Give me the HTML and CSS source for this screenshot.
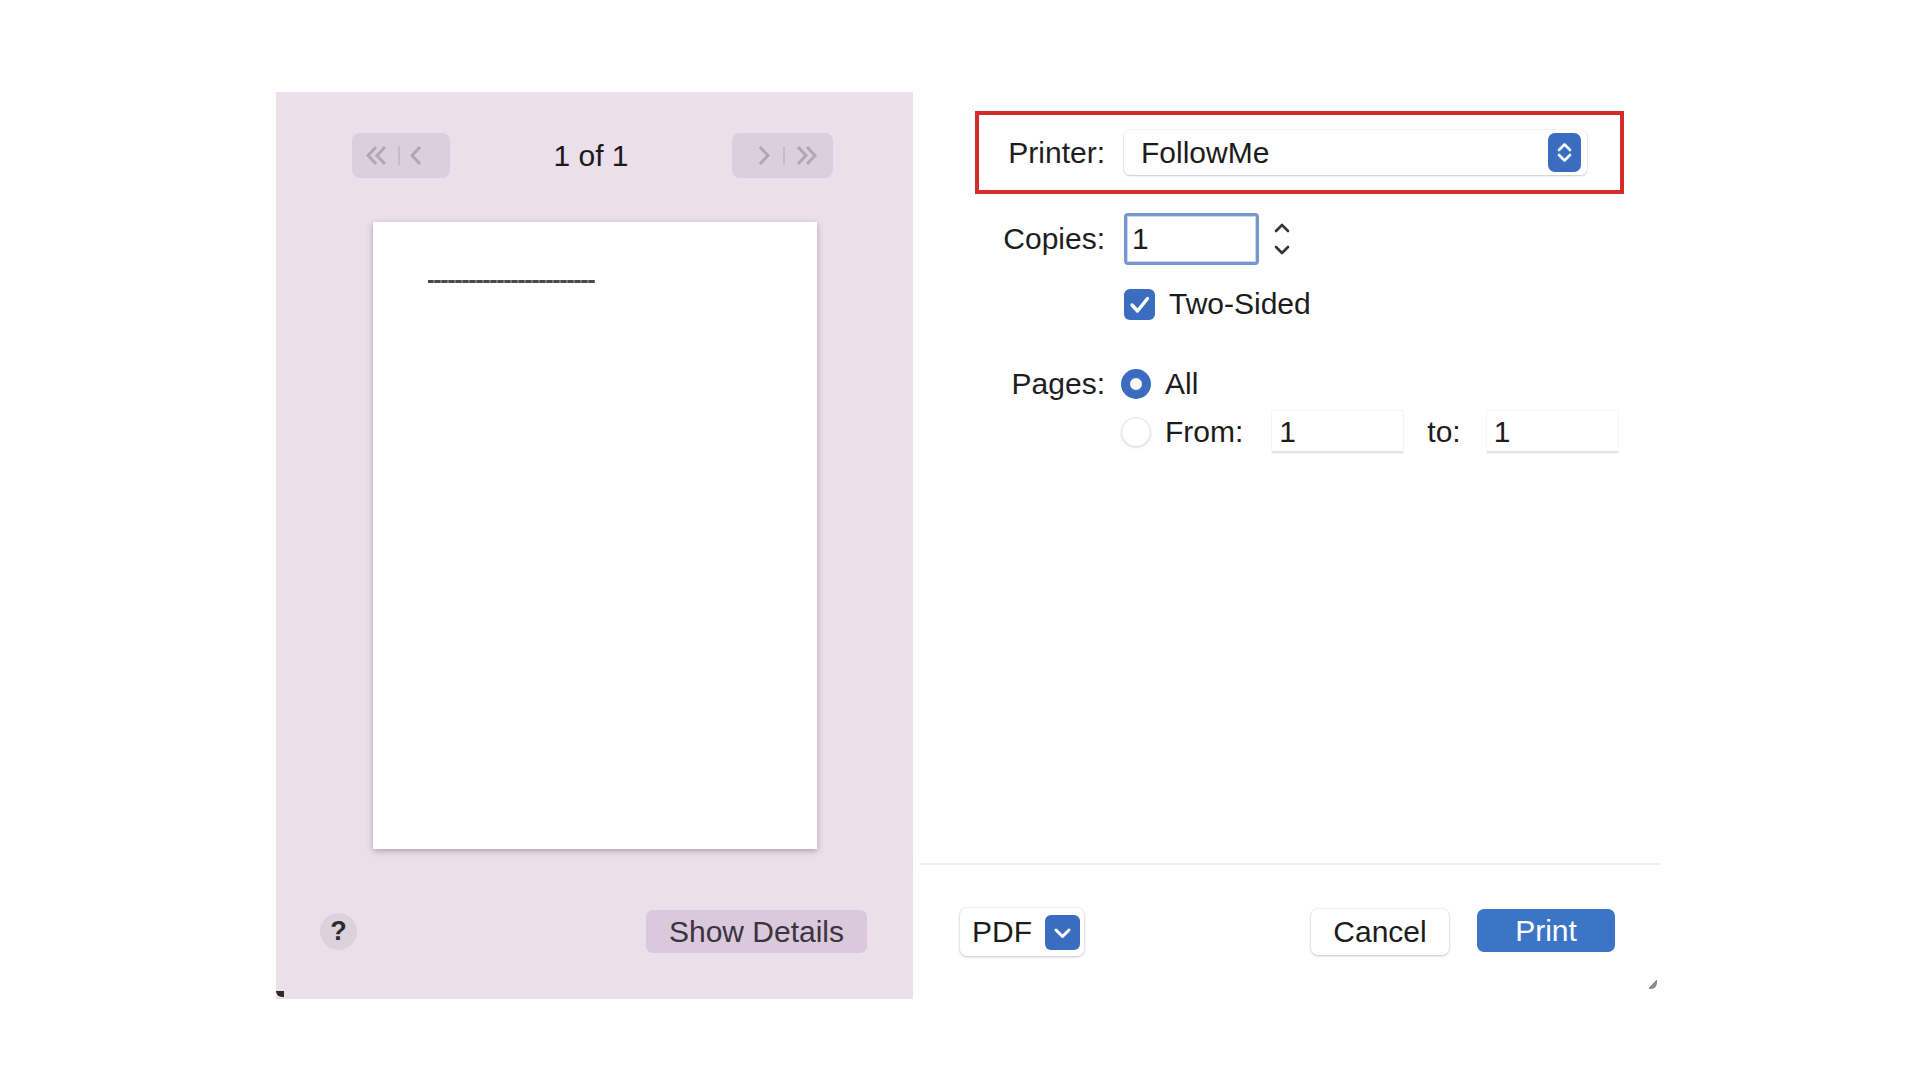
FILE: index.html
```html
<!DOCTYPE html>
<html lang="en">
<head>
    <meta charset="UTF-8">
    <meta name="viewport" content="width=device-width, initial-scale=1.0">
    <title>Print</title>
    <link rel="stylesheet" href="styles.css">
</head>
<body>
    <div class="dialog">
        <!-- preview side -->
        <div class="preview">
            <div class="nav">
                <div class="nav-btn">
                    <svg width="98" height="45" viewBox="0 0 98 45">
                        <path d="M24 14 L16 22.5 L24 31 M33 14 L25 22.5 L33 31" fill="none" stroke="#b3a5b5" stroke-width="3"/>
                        <line x1="47" y1="13" x2="47" y2="32" stroke="#c8bbc9" stroke-width="2"/>
                        <path d="M68 14 L60 22.5 L68 31" fill="none" stroke="#b3a5b5" stroke-width="3"/>
                    </svg>
                </div>
                <div class="page-count">1 of 1</div>
                <div class="nav-btn">
                    <svg width="101" height="45" viewBox="0 0 101 45">
                        <path d="M28 14 L36 22.5 L28 31" fill="none" stroke="#b3a5b5" stroke-width="3"/>
                        <line x1="52" y1="13" x2="52" y2="32" stroke="#c8bbc9" stroke-width="2"/>
                        <path d="M66 14 L74 22.5 L66 31 M75 14 L83 22.5 L75 31" fill="none" stroke="#b3a5b5" stroke-width="3"/>
                    </svg>
                </div>
            </div>
            <div class="paper">
                <div class="paper-line"></div>
            </div>
            <div class="preview-foot">
                <div class="help">?</div>
                <div class="details-btn">Show Details</div>
            </div>
        </div>

        <!-- settings side -->
        <div class="settings">
            <div class="form">
                <div class="row printer-row">
                    <span class="label">Printer:</span>
                    <div class="popup">
                        <span>FollowMe</span>
                        <svg width="33" height="39" viewBox="0 0 33 39">
                            <rect x="0" y="0" width="33" height="39" rx="7" fill="#3a6dc0"/>
                            <path d="M11 17 L16.5 11.5 L22 17 M11 22 L16.5 27.5 L22 22" fill="none" stroke="#fff" stroke-width="2.6" stroke-linecap="round" stroke-linejoin="round"/>
                        </svg>
                    </div>
                </div>
                <div class="row copies-row">
                    <span class="label">Copies:</span>
                    <div class="copies">
                        <div class="copies-input">1</div>
                        <svg width="18" height="36" viewBox="0 0 18 36">
                            <path d="M3 10 L9 4 L15 10 M3 26 L9 32 L15 26" fill="none" stroke="#333" stroke-width="2.6" stroke-linecap="round" stroke-linejoin="round"/>
                        </svg>
                    </div>
                </div>
                <div class="row check-row">
                    <span class="label"></span>
                    <div class="check">
                        <svg width="31" height="31" viewBox="0 0 31 31">
                            <rect width="31" height="31" rx="6" fill="#3a6dc0"/>
                            <path d="M8 16 L13.5 22 L23.5 9.5" fill="none" stroke="#fff" stroke-width="3.4" stroke-linecap="round" stroke-linejoin="round"/>
                        </svg>
                        <span>Two-Sided</span>
                    </div>
                </div>
                <div class="row pages-row">
                    <span class="label">Pages:</span>
                    <div class="radio">
                        <span class="dot on"></span>
                        <span>All</span>
                    </div>
                </div>
                <div class="row from-row">
                    <span class="label"></span>
                    <div class="radio">
                        <span class="dot"></span>
                        <span class="from-label">From:</span>
                        <div class="range-input">1</div>
                        <span class="to-label">to:</span>
                        <div class="range-input">1</div>
                    </div>
                </div>
            </div>
            <div class="settings-foot">
                <div class="pdf-btn">
                    <span>PDF</span>
                    <svg width="35" height="35" viewBox="0 0 35 35">
                        <rect width="35" height="35" rx="6" fill="#3a6dc0"/>
                        <path d="M11 15 L17.5 21.5 L24 15" fill="none" stroke="#fff" stroke-width="3" stroke-linecap="round" stroke-linejoin="round"/>
                    </svg>
                </div>
                <div class="actions">
                    <div class="btn cancel">Cancel</div>
                    <div class="btn print">Print</div>
                </div>
            </div>
        </div>
    </div>
</body>
</html>
```
FILE: styles.css
```css
/* base */
body {
    margin: 0;
    padding: 92px 0 0 276px;
    background: #fff;
    color: #1c1c1c;
    font-family: "Liberation Sans", Arial, sans-serif;
    font-size: 30px;
}
.dialog {
    position: relative;
    display: flex;
    width: 1385px;
    height: 907px;
}
.dialog::after {
    content: "";
    position: absolute;
    left: 0;
    bottom: 2px;
    width: 8px;
    height: 6px;
    border-radius: 0 0 0 6px;
    background: #2a2a2a;
}

/* preview panel */
.preview {
    width: 637px;
    flex-shrink: 0;
    display: flex;
    flex-direction: column;
    box-sizing: border-box;
    padding: 41px 0 46px;
    background: #ecdfec;
}
.nav {
    display: flex;
    justify-content: space-between;
    align-items: center;
    height: 45px;
    padding: 0 80px 0 76px;
}
.nav-btn {
    height: 45px;
    border-radius: 8px;
    background: #dccfdd;
}
.nav-btn svg {
    display: block;
}
.page-count {
    color: #1a1a1a;
}
.paper {
    width: 444px;
    height: 627px;
    margin: 44px auto 0;
    padding: 58px 0 0 55px;
    box-sizing: border-box;
    background: #fff;
    box-shadow: 0 2px 6px rgba(60, 40, 60, 0.35);
}
.paper-line {
    width: 167px;
    height: 3px;
    background: repeating-linear-gradient(90deg, #4a4a4a 0 5px, #777 5px 7px);
}
.preview-foot {
    margin-top: auto;
    display: flex;
    justify-content: space-between;
    align-items: center;
    padding: 0 46px 0 44px;
}
.help {
    width: 37px;
    height: 37px;
    border-radius: 50%;
    background: #ddd1de;
    color: #2b2b2b;
    font-size: 27px;
    font-weight: bold;
    line-height: 37px;
    text-align: center;
}
.details-btn {
    width: 221px;
    height: 43px;
    line-height: 43px;
    text-align: center;
    border-radius: 7px;
    background: #d9c9da;
    color: #3a3340;
}

/* settings panel */
.settings {
    flex: 1;
    display: flex;
    flex-direction: column;
    background: #fff;
}
.form {
    flex: 1;
    padding: 19px 37px 0 62px;
}
.row {
    display: grid;
    grid-template-columns: 126px 1fr;
    column-gap: 19px;
    align-items: center;
    padding-left: 4px;
}
.label {
    text-align: right;
    color: #1e1e1e;
}
.printer-row {
    height: 75px;
    padding: 0 33px 0 0;
    border: 4px solid #d42b2b;
}
.popup {
    display: flex;
    justify-content: space-between;
    align-items: center;
    height: 45px;
    padding: 0 6px 0 17px;
    border-radius: 6px;
    background: #fff;
    box-shadow: 0 1px 2px rgba(0, 0, 0, 0.18), 0 0 0 1px rgba(0, 0, 0, 0.04);
}
.popup svg {
    display: block;
}
.copies-row {
    margin-top: 19px;
}
.copies {
    display: flex;
    align-items: center;
    gap: 14px;
}
.copies-input {
    width: 135px;
    height: 52px;
    box-sizing: border-box;
    padding-left: 5px;
    line-height: 46px;
    border: 3px solid #7796d2;
    border-radius: 4px;
    box-shadow: inset 0 0 0 1px #c9d6ef;
}
.copies svg {
    display: block;
}
.check-row {
    margin-top: 22px;
}
.check {
    display: flex;
    align-items: center;
    gap: 14px;
}
.check svg {
    display: block;
}
.pages-row {
    margin-top: 46px;
}
.from-row {
    margin-top: 10px;
}
.radio {
    display: flex;
    align-items: center;
    gap: 14px;
    margin-left: -3px;
}
.dot {
    width: 30px;
    height: 30px;
    box-sizing: border-box;
    border-radius: 50%;
    background: #fff;
    border: 1px solid #e2e2e2;
    box-shadow: 0 1px 2px rgba(0, 0, 0, 0.12);
}
.dot.on {
    border: 9px solid #3a6dc0;
    box-shadow: none;
}
.from-row .from-label {
    margin-right: 15px;
}
.range-input {
    width: 131px;
    height: 42px;
    box-sizing: border-box;
    padding-left: 7px;
    line-height: 42px;
    background: #fff;
    border-bottom: 2px solid #e4e4e4;
    box-shadow: 0 0 0 1px #f4f4f4;
}
.to-label {
    margin: 0 12px 0 10px;
}

/* footer */
.settings-foot {
    position: relative;
    display: flex;
    justify-content: space-between;
    align-items: center;
    height: 134px;
    padding: 0 46px 0 41px;
    border-top: 2px solid #f0f0f0;
    margin-left: 6px;
}
.settings-foot::after {
    content: "";
    position: absolute;
    right: 4px;
    bottom: 10px;
    width: 8px;
    height: 12px;
    border-radius: 0 0 6px 0;
    background: linear-gradient(135deg, transparent 50%, #8a8a8a 50%);
}
.pdf-btn {
    display: flex;
    align-items: center;
    gap: 13px;
    height: 48px;
    padding: 0 4px 0 12px;
    border-radius: 7px;
    background: #fff;
    box-shadow: 0 1px 3px rgba(0, 0, 0, 0.2), 0 0 0 1px rgba(0, 0, 0, 0.04);
}
.pdf-btn svg {
    display: block;
}
.actions {
    display: flex;
    gap: 28px;
}
.btn {
    width: 138px;
    height: 46px;
    line-height: 46px;
    text-align: center;
    border-radius: 7px;
}
.cancel {
    background: #fff;
    box-shadow: 0 1px 3px rgba(0, 0, 0, 0.2), 0 0 0 1px rgba(0, 0, 0, 0.04);
}
.print {
    height: 43px;
    line-height: 43px;
    background: #3d75c6;
    color: #fff;
}
```
